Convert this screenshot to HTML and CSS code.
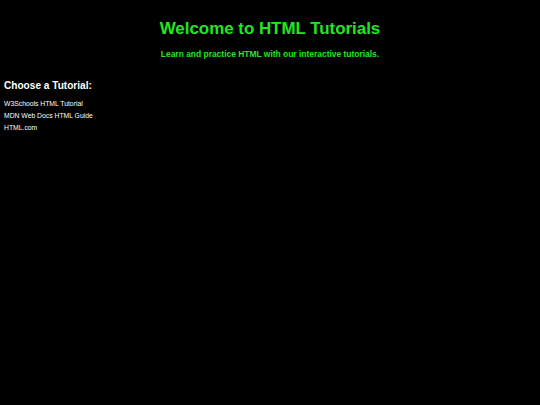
FILE: index.html
```html
<!DOCTYPE html>
<html>
<head>
<meta charset="utf-8">
<link rel="stylesheet" href="styles.css">
</head>
<body>
<header class="hero">
  <h1 class="title">Welcome to HTML Tutorials</h1>
  <p class="subtitle">Learn and practice HTML with our interactive tutorials.</p>
</header>
<section class="tutorials">
  <h2 class="heading">Choose a Tutorial:</h2>
  <ul class="links">
    <li><a class="link" href="#">W3Schools HTML Tutorial</a></li>
    <li><a class="link" href="#">MDN Web Docs HTML Guide</a></li>
    <li><a class="link" href="#">HTML.com</a></li>
  </ul>
</section>
</body>
</html>
```
FILE: styles.css
```css
html, body {
  background: #000;
}
body {
  margin: 0;
  padding: 0 4px;
  font-family: "Liberation Sans", Arial, sans-serif;
  color: #fff;
}
.hero {
  text-align: center;
  padding-top: 19px;
}
.title {
  margin: 0;
  font-size: 16.9px;
  line-height: 20px;
  font-weight: bold;
  color: #22e622;
}
.subtitle {
  margin: 9px 0 0;
  font-size: 8.45px;
  line-height: 12px;
  font-weight: bold;
  color: #22e622;
}
.tutorials {
  margin-top: 19px;
}
.heading {
  margin: 0;
  font-size: 10.1px;
  line-height: 14px;
  font-weight: bold;
  color: #fff;
}
.links {
  list-style: none;
  margin: 5px 0 0;
  padding: 0;
}
.links li {
  font-size: 6.8px;
  line-height: 12px;
}
.link {
  color: #fff;
  text-decoration: none;
}
```
